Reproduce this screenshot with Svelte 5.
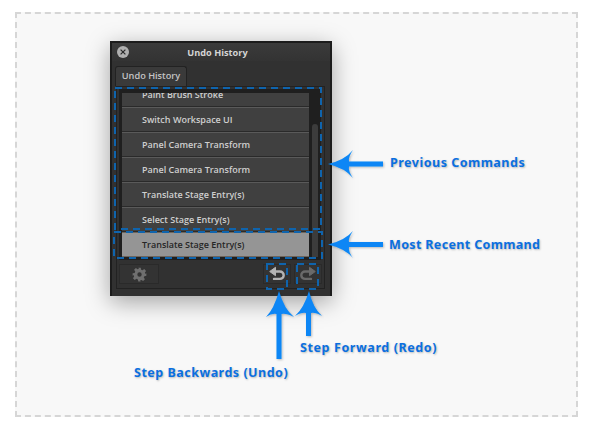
<script>
  const previous = [
    'Switch Workspace UI',
    'Panel Camera Transform',
    'Panel Camera Transform',
    'Translate Stage Entry(s)',
    'Select Stage Entry(s)'
  ];

  // annotation boxes drawn over the panel
  const boxes = [
    { x: 115, y: 88, w: 206, h: 141 },
    { x: 114, y: 232, w: 208, h: 26 },
    { x: 267, y: 264, w: 20, h: 25 },
    { x: 297, y: 264, w: 21, h: 25 }
  ];
</script>

<div class="page">
  <div class="frame">
    <section class="panel">
      <header class="titlebar">
        <span class="close">
          <svg width="12" height="12" viewBox="0 0 12 12"><path d="M3.6 3.6l4.8 4.8M8.4 3.6l-4.8 4.8" stroke="#2a2a2a" stroke-width="1.2" fill="none"/></svg>
        </span>
        <h1>Undo History</h1>
      </header>

      <div class="tabs"><span class="tab">Undo History</span></div>

      <div class="body">
        <div class="list-wrap">
          <ul class="list">
            <li class="cut">Paint Brush Stroke</li>
            {#each previous as item}
              <li>{item}</li>
            {/each}
            <li class="current">Translate Stage Entry(s)</li>
          </ul>
          <div class="scrollbar"><div class="thumb"></div></div>
        </div>

        <footer class="actions">
          <button class="gear" type="button" aria-label="Settings">
            <svg width="15" height="15" viewBox="0 0 24 24"><path fill="#6f6f6f" fill-rule="evenodd" d="M10 1h4l.6 3.200 2.300 1 2.700-1.900 2.900 2.900-1.900 2.700 1 2.300L23 10v4l-3.200.6-1 2.300 1.900 2.700-2.900 2.900-2.700-1.900-2.300 1L14 23h-4l-.6-3.200-2.300-1-2.700 1.900-2.900-2.900 1.900-2.700-1-2.300L1 14v-4l3.200-.6 1-2.300-1.900-2.700 2.900-2.900 2.700 1.900 2.300-1zM12 8.500a3.500 3.500 0 1 0 0 7 3.500 3.500 0 0 0 0-7z"/></svg>
          </button>
          <div class="spacer"></div>
          <button class="step" type="button" aria-label="Undo">
            <svg width="18" height="16" viewBox="0 0 18 16">
              <path d="M7 5.500h5a3.700 3.700 0 0 1 0 7.400H6" fill="none" stroke="#b4b4b4" stroke-width="2.400" stroke-linecap="round"/>
              <path d="M7.500 1.300v8.400L1.700 5.500z" fill="#b4b4b4" stroke="#b4b4b4" stroke-linejoin="round"/>
            </svg>
          </button>
          <button class="step" type="button" aria-label="Redo">
            <svg width="18" height="16" viewBox="0 0 18 16">
              <path d="M11 5.500H6a3.700 3.700 0 0 0 0 7.400h6" fill="none" stroke="#6a6a6a" stroke-width="2.400" stroke-linecap="round"/>
              <path d="M10.500 1.300v8.400l5.800-4.200z" fill="#6a6a6a" stroke="#6a6a6a" stroke-linejoin="round"/>
            </svg>
          </button>
        </footer>
      </div>
    </section>
  </div>

  <svg class="marks" width="592" height="427" viewBox="0 0 592 427">
    <defs>
      <filter id="soft" x="-20%" y="-20%" width="140%" height="140%">
        <feDropShadow dx="1" dy="1" stdDeviation="1" flood-color="#000" flood-opacity="0.25"/>
      </filter>
    </defs>
    {#each boxes as b}
      <rect x={b.x} y={b.y} width={b.w} height={b.h} fill="none" stroke="#0f64ad" stroke-width="2" stroke-dasharray="7 5"/>
    {/each}
    <g fill="#0a86f5" filter="url(#soft)">
      <path d="M328 164Q345 160 353 150Q348 157 349 161.500H383V166.500H349Q348 171 353 178Q345 168 328 164z"/>
      <path d="M328 244.500Q345 240.500 353 231Q348 238 349 242H383V247H349Q348 251.500 353 258Q345 248.500 328 244.500z"/>
      <path d="M279 291Q284 309 294 317Q286 313 281.500 314V359H276.500V314Q272 313 266 317Q274 309 279 291z"/>
      <path d="M309 291Q313 308 322 316Q315 312 311 313V336H306V313Q302 312 295 316Q304 308 309 291z"/>
    </g>
  </svg>

  <span class="note n1">Previous Commands</span>
  <span class="note n2">Most Recent Command</span>
  <span class="note n3">Step Forward (Redo)</span>
  <span class="note n4">Step Backwards (Undo)</span>
</div>

<style>
  :global(body) {
    margin: 0;
    background: #fff;
  }

  .page {
    position: relative;
    width: 592px;
    height: 427px;
    overflow: hidden;
    padding: 12px 14px 10px 15px;
    box-sizing: border-box;
    font-family: "Open Sans", sans-serif;
  }

  .frame {
    height: 405px;
    box-sizing: border-box;
    border: 2px dashed #d6d6d6;
    background: #f8f8f8;
    padding: 27px 0 0 93px;
  }

  .panel {
    width: 222px;
    height: 255px;
    box-sizing: border-box;
    background: #313131;
    border: 2px solid #1c1c1c;
    border-bottom-width: 0;
    box-shadow: 0 6px 22px rgba(0, 0, 0, 0.35);
    display: flex;
    flex-direction: column;
  }

  .titlebar {
    height: 18px;
    flex: none;
    display: flex;
    align-items: center;
    background: linear-gradient(#3b3b3b, #333);
  }

  .close {
    width: 12px;
    height: 12px;
    margin-left: 5px;
    border-radius: 50%;
    background: #b0b0b0;
    display: flex;
  }

  .titlebar h1 {
    flex: 1;
    margin: 0 24px 0 0;
    font-size: 9.2px;
    font-weight: 700;
    text-align: center;
    color: #d4d4d4;
  }

  .tabs {
    height: 25px;
    flex: none;
    display: flex;
    align-items: flex-end;
    padding-left: 3px;
  }

  .tab {
    width: 72px;
    height: 20px;
    box-sizing: border-box;
    background: #3a3a3a;
    border: 1px solid #222;
    border-bottom: 0;
    border-radius: 3px 3px 0 0;
    font-size: 9.2px;
    font-weight: 600;
    line-height: 18px;
    text-align: center;
    color: #c4c4c4;
  }

  .body {
    flex: 1;
    margin: 0 5px 7px 4px;
    border: 1px solid #222;
    display: flex;
    flex-direction: column;
    min-height: 0;
  }

  .list-wrap {
    height: 171px;
    flex: none;
    margin: 2px 3px 0 2px;
    background: #1f1f1f;
    display: flex;
    padding: 4px 0 3px 3px;
    box-sizing: border-box;
  }

  .list {
    list-style: none;
    margin: 0;
    padding: 0;
    width: 187px;
    flex: none;
    overflow: hidden;
    color: #cfcfcf;
    font-size: 9px;
    font-weight: 600;
  }

  .list li {
    height: 25px;
    box-sizing: border-box;
    padding-left: 20px;
    line-height: 23px;
    background: #404040;
    border-top: 1px solid #5a5a5a;
    border-bottom: 1px solid #2a2a2a;
  }

  .list .cut {
    height: 14px;
    line-height: 3px;
    border-top: 0;
    overflow: hidden;
  }

  .list .current {
    background: #959595;
    color: #262626;
    border-top-color: #6e655c;
    border-bottom-color: #6e655c;
  }

  .scrollbar {
    flex: 1;
    padding: 31px 3px 0;
  }

  .thumb {
    height: 100%;
    background: #3c3c3c;
    border-radius: 3px 3px 0 0;
  }

  .actions {
    flex: 1;
    display: flex;
    align-items: flex-start;
    padding: 4px 2px 0;
    gap: 3px;
  }

  .spacer {
    flex: 1;
  }

  .actions button {
    margin: 0;
    padding: 0;
    height: 20px;
    background: #333;
    border: 1px solid #2a2a2a;
    display: flex;
    align-items: center;
    justify-content: center;
  }

  .gear {
    width: 40px;
  }

  .step {
    width: 28px;
  }

  .marks {
    position: absolute;
    left: 0;
    top: 0;
  }

  .note {
    position: absolute;
    font-family: "Noto Sans", sans-serif;
    font-weight: 700;
    font-size: 12.5px;
    letter-spacing: 0.5px;
    line-height: 16px;
    color: #0a6fe0;
    text-shadow: 1px 1px 2px rgba(0, 0, 0, 0.25);
    white-space: nowrap;
  }

  .n1 { left: 390px; top: 155px; }
  .n2 { left: 389px; top: 237px; letter-spacing: 0.35px; }
  .n3 { left: 300px; top: 340px; letter-spacing: 0.6px; }
  .n4 { left: 134px; top: 365px; }
</style>
